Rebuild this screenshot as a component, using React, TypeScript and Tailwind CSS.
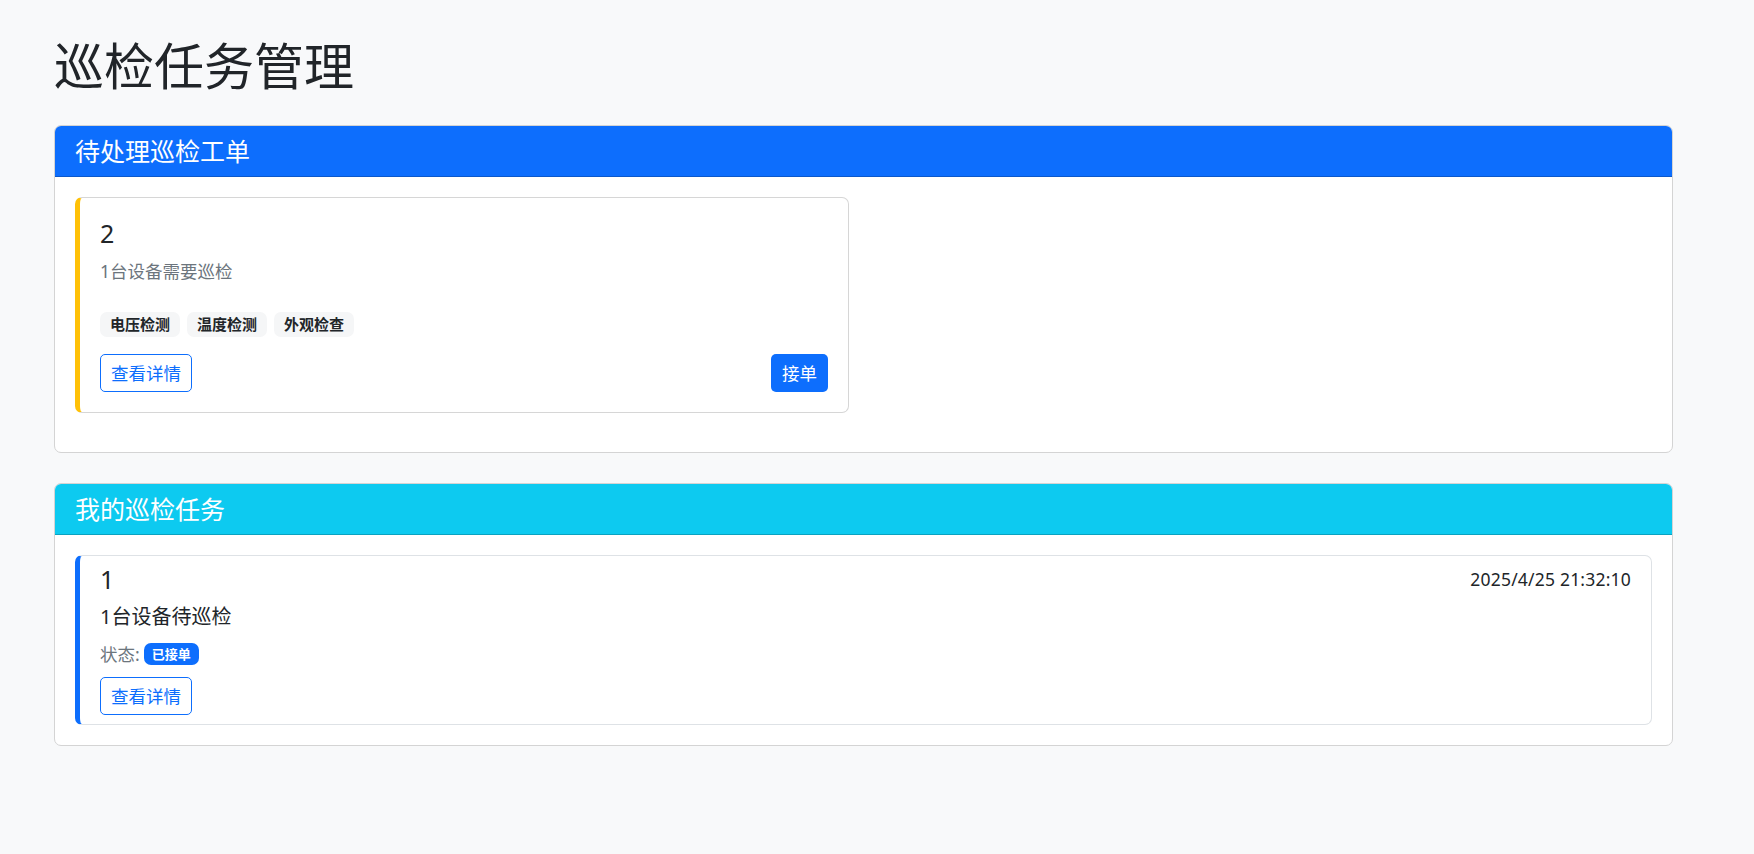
import React from "react";

const FONT = '"Noto Sans", "Noto Sans CJK SC", sans-serif';

function Tag({ children }: { children: React.ReactNode }) {
  return (
    <span className="inline-flex items-center h-[25px] px-[10px] rounded-[7px] bg-[#f5f6f7] text-[#212529] font-bold text-[15px] leading-none">
      {children}
    </span>
  );
}

function OutlineBtn({ children }: { children: React.ReactNode }) {
  return (
    <button className="h-[38px] px-[10px] border border-[#0d6efd] text-[#0d6efd] text-[17.5px] leading-[26px] rounded-[5px] bg-white">
      {children}
    </button>
  );
}

export default function App() {
  return (
    <div className="min-h-screen bg-[#f8f9fa] text-[#212529]" style={{ fontFamily: FONT }}>
      <div className="pl-[54px] pr-[81px] pt-[36px] pb-[40px]">
        <h1 className="text-[50px] leading-[60px] font-normal mb-[29px]">巡检任务管理</h1>

        {/* Card 1 */}
        <div className="mb-[30px] border border-[#d4d4d4] rounded-[7px] bg-white overflow-hidden">
          <div className="bg-[#0d6efd] px-[20px] py-[10px] border-b border-[#0b58ca] text-white text-[25px] leading-[30px]">
            待处理巡检工单
          </div>
          <div className="p-[20px]">
            <div className="w-[774px] mb-[19px] border border-[#d6d6d6] border-l-[5px] border-l-[#ffc107] rounded-[7px] bg-white px-[20px] pt-[20px] pb-[20px]">
              <div className="text-[25px] leading-[30px] mb-[10px]">2</div>
              <div className="text-[17.5px] leading-[26px] text-[#6c757d] mb-[28px]">1台设备需要巡检</div>
              <div className="flex gap-[7px] mb-[17px]">
                <Tag>电压检测</Tag>
                <Tag>温度检测</Tag>
                <Tag>外观检查</Tag>
              </div>
              <div className="flex justify-between items-center">
                <OutlineBtn>查看详情</OutlineBtn>
                <button className="h-[38px] px-[11px] bg-[#0d6efd] text-white text-[17.5px] leading-[26px] rounded-[5px]">
                  接单
                </button>
              </div>
            </div>
          </div>
        </div>

        {/* Card 2 */}
        <div className="border border-[#d4d4d4] rounded-[7px] bg-white overflow-hidden">
          <div className="bg-[#0dcaf0] px-[20px] py-[10px] border-b border-[#0aa2c0] text-white text-[25px] leading-[30px]">
            我的巡检任务
          </div>
          <div className="p-[20px]">
            <div className="border border-[#dee2e6] border-l-[5px] border-l-[#0d6efd] rounded-[7px] bg-white px-[20px] pt-[10px] pb-[9px]">
              <div className="flex justify-between items-start">
                <div className="text-[25px] leading-[30px] -mt-[2px]">1</div>
                <div className="text-[17.5px] leading-[26px] tracking-[0.2px]">2025/4/25 21:32:10</div>
              </div>
              <div className="text-[20px] leading-[30px] mt-[8px] mb-[7px]">1台设备待巡检</div>
              <div className="flex items-center gap-[4px] h-[30px] mb-[8px]">
                <span className="text-[17.5px] leading-[26px] text-[#6c757d]">状态:</span>
                <span className="inline-flex items-center h-[22px] px-[8px] rounded-[7px] bg-[#0d6efd] text-white font-bold text-[13px] leading-none">
                  已接单
                </span>
              </div>
              <OutlineBtn>查看详情</OutlineBtn>
            </div>
          </div>
        </div>
      </div>
    </div>
  );
}
